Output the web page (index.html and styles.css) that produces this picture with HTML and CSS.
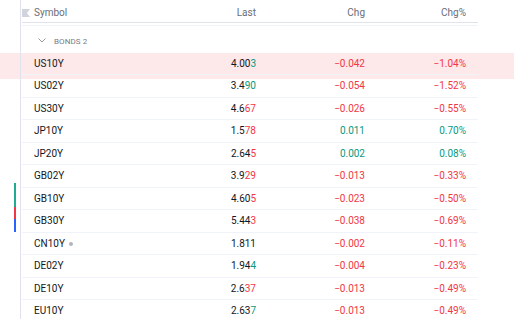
FILE: index.html
```html
<!DOCTYPE html>
<html>
<head>
<meta charset="utf-8">
<link rel="stylesheet" href="styles.css">
</head>
<body>
<div class="flash"></div>
<div class="layout">
  <aside class="strip">
    <span class="mark teal"></span>
    <span class="mark red"></span>
    <span class="mark blue"></span>
  </aside>
  <main class="table">
    <div class="head">
      <div class="cell sym"><svg class="flag" width="8" height="8" viewBox="0 0 8 8"><polygon points="0,0 8,0 5,4 8,8 0,8" fill="#d1d4dc"/></svg>Symbol</div>
      <div class="cell num">Last</div>
      <div class="cell num">Chg</div>
      <div class="cell num">Chg%</div>
    </div>
    <div class="group">
      <svg class="chev" width="8" height="5" viewBox="0 0 8 5"><polyline points="0.5,0.5 4,4 7.5,0.5" fill="none" stroke="#9598a1" stroke-width="1"/></svg>
      <span>BONDS 2</span>
    </div>
    <div class="row"><div class="cell sym">US10Y</div><div class="cell num">4.00<span class="up">3</span></div><div class="cell num dn">−0.042</div><div class="cell num dn">−1.04%</div></div>
    <div class="row"><div class="cell sym">US02Y</div><div class="cell num">3.4<span class="up">90</span></div><div class="cell num dn">−0.054</div><div class="cell num dn">−1.52%</div></div>
    <div class="row"><div class="cell sym">US30Y</div><div class="cell num">4.6<span class="dn">67</span></div><div class="cell num dn">−0.026</div><div class="cell num dn">−0.55%</div></div>
    <div class="row"><div class="cell sym">JP10Y</div><div class="cell num">1.5<span class="dn">78</span></div><div class="cell num up">0.011</div><div class="cell num up">0.70%</div></div>
    <div class="row"><div class="cell sym">JP20Y</div><div class="cell num">2.64<span class="dn">5</span></div><div class="cell num up">0.002</div><div class="cell num up">0.08%</div></div>
    <div class="row"><div class="cell sym">GB02Y</div><div class="cell num">3.9<span class="dn">29</span></div><div class="cell num dn">−0.013</div><div class="cell num dn">−0.33%</div></div>
    <div class="row"><div class="cell sym">GB10Y</div><div class="cell num">4.60<span class="dn">5</span></div><div class="cell num dn">−0.023</div><div class="cell num dn">−0.50%</div></div>
    <div class="row"><div class="cell sym">GB30Y</div><div class="cell num">5.44<span class="dn">3</span></div><div class="cell num dn">−0.038</div><div class="cell num dn">−0.69%</div></div>
    <div class="row"><div class="cell sym">CN10Y<span class="dot"></span></div><div class="cell num">1.811</div><div class="cell num dn">−0.002</div><div class="cell num dn">−0.11%</div></div>
    <div class="row"><div class="cell sym">DE02Y</div><div class="cell num">1.94<span class="up">4</span></div><div class="cell num dn">−0.004</div><div class="cell num dn">−0.23%</div></div>
    <div class="row"><div class="cell sym">DE10Y</div><div class="cell num">2.6<span class="dn">37</span></div><div class="cell num dn">−0.013</div><div class="cell num dn">−0.49%</div></div>
    <div class="row"><div class="cell sym">EU10Y</div><div class="cell num">2.63<span class="up">7</span></div><div class="cell num dn">−0.013</div><div class="cell num dn">−0.49%</div></div>
  </main>
</div>
</body>
</html>
```
FILE: styles.css
```css
html, body {
  margin: 0;
  padding: 0;
  background: #ffffff;
  height: 319px;
  overflow: hidden;
}
body {
  position: relative;
  font-family: Roboto, "Liberation Sans", Arial, sans-serif;
  font-size: 10px;
  color: #131722;
}
.flash {
  position: absolute;
  left: 0;
  right: 0;
  top: 53px;
  height: 26px;
  background: #fde8ea;
  z-index: 0;
}
.layout {
  position: relative;
  z-index: 1;
  display: flex;
  align-items: flex-start;
}
.strip {
  width: 20px;
  height: 319px;
  border-right: 1px solid #e0e3eb;
  display: flex;
  flex-direction: column;
  align-items: flex-end;
  padding-top: 183px;
  padding-right: 4px;
  box-sizing: border-box;
  width: 21px;
}
.mark { width: 2px; display: block; }
.mark.teal { height: 24px; background: #22ab94; }
.mark.red { height: 12px; background: #f23645; }
.mark.blue { height: 13px; background: #2962ff; }
.table {
  margin-left: 1px;
  width: 456px;
}
.head, .row {
  display: grid;
  grid-template-columns: 142px 80px 109px 101px;
  padding: 0 12px;
  box-sizing: border-box;
  align-items: center;
}
.head {
  height: 23px;
  padding-top: 2px;
  border-bottom: 1px solid #e0e3eb;
  color: #6a6d78;
}
.head .sym {
  position: relative;
}
.flag {
  position: absolute;
  left: -12px;
  top: 2px;
}
.group {
  margin-top: 2px;
  border-top: 1px solid #f0f3fa;
  height: 27.5px;
  box-sizing: border-box;
  display: flex;
  align-items: center;
  padding: 4px 0 0 16px;
  font-size: 8px;
  color: #787b86;
  letter-spacing: 0.1px;
}
.chev { margin-right: 8px; margin-top: -2px; }
.row {
  height: 22.5px;
  border-bottom: 1px solid #f0f3fa;
}
.cell { white-space: nowrap; }
.num { text-align: right; }
.up { color: #089981; }
.dn { color: #f23645; }
.dot {
  display: inline-block;
  width: 4px;
  height: 4px;
  border-radius: 50%;
  background: #b2b5be;
  margin-left: 4px;
  vertical-align: 1px;
}
```
